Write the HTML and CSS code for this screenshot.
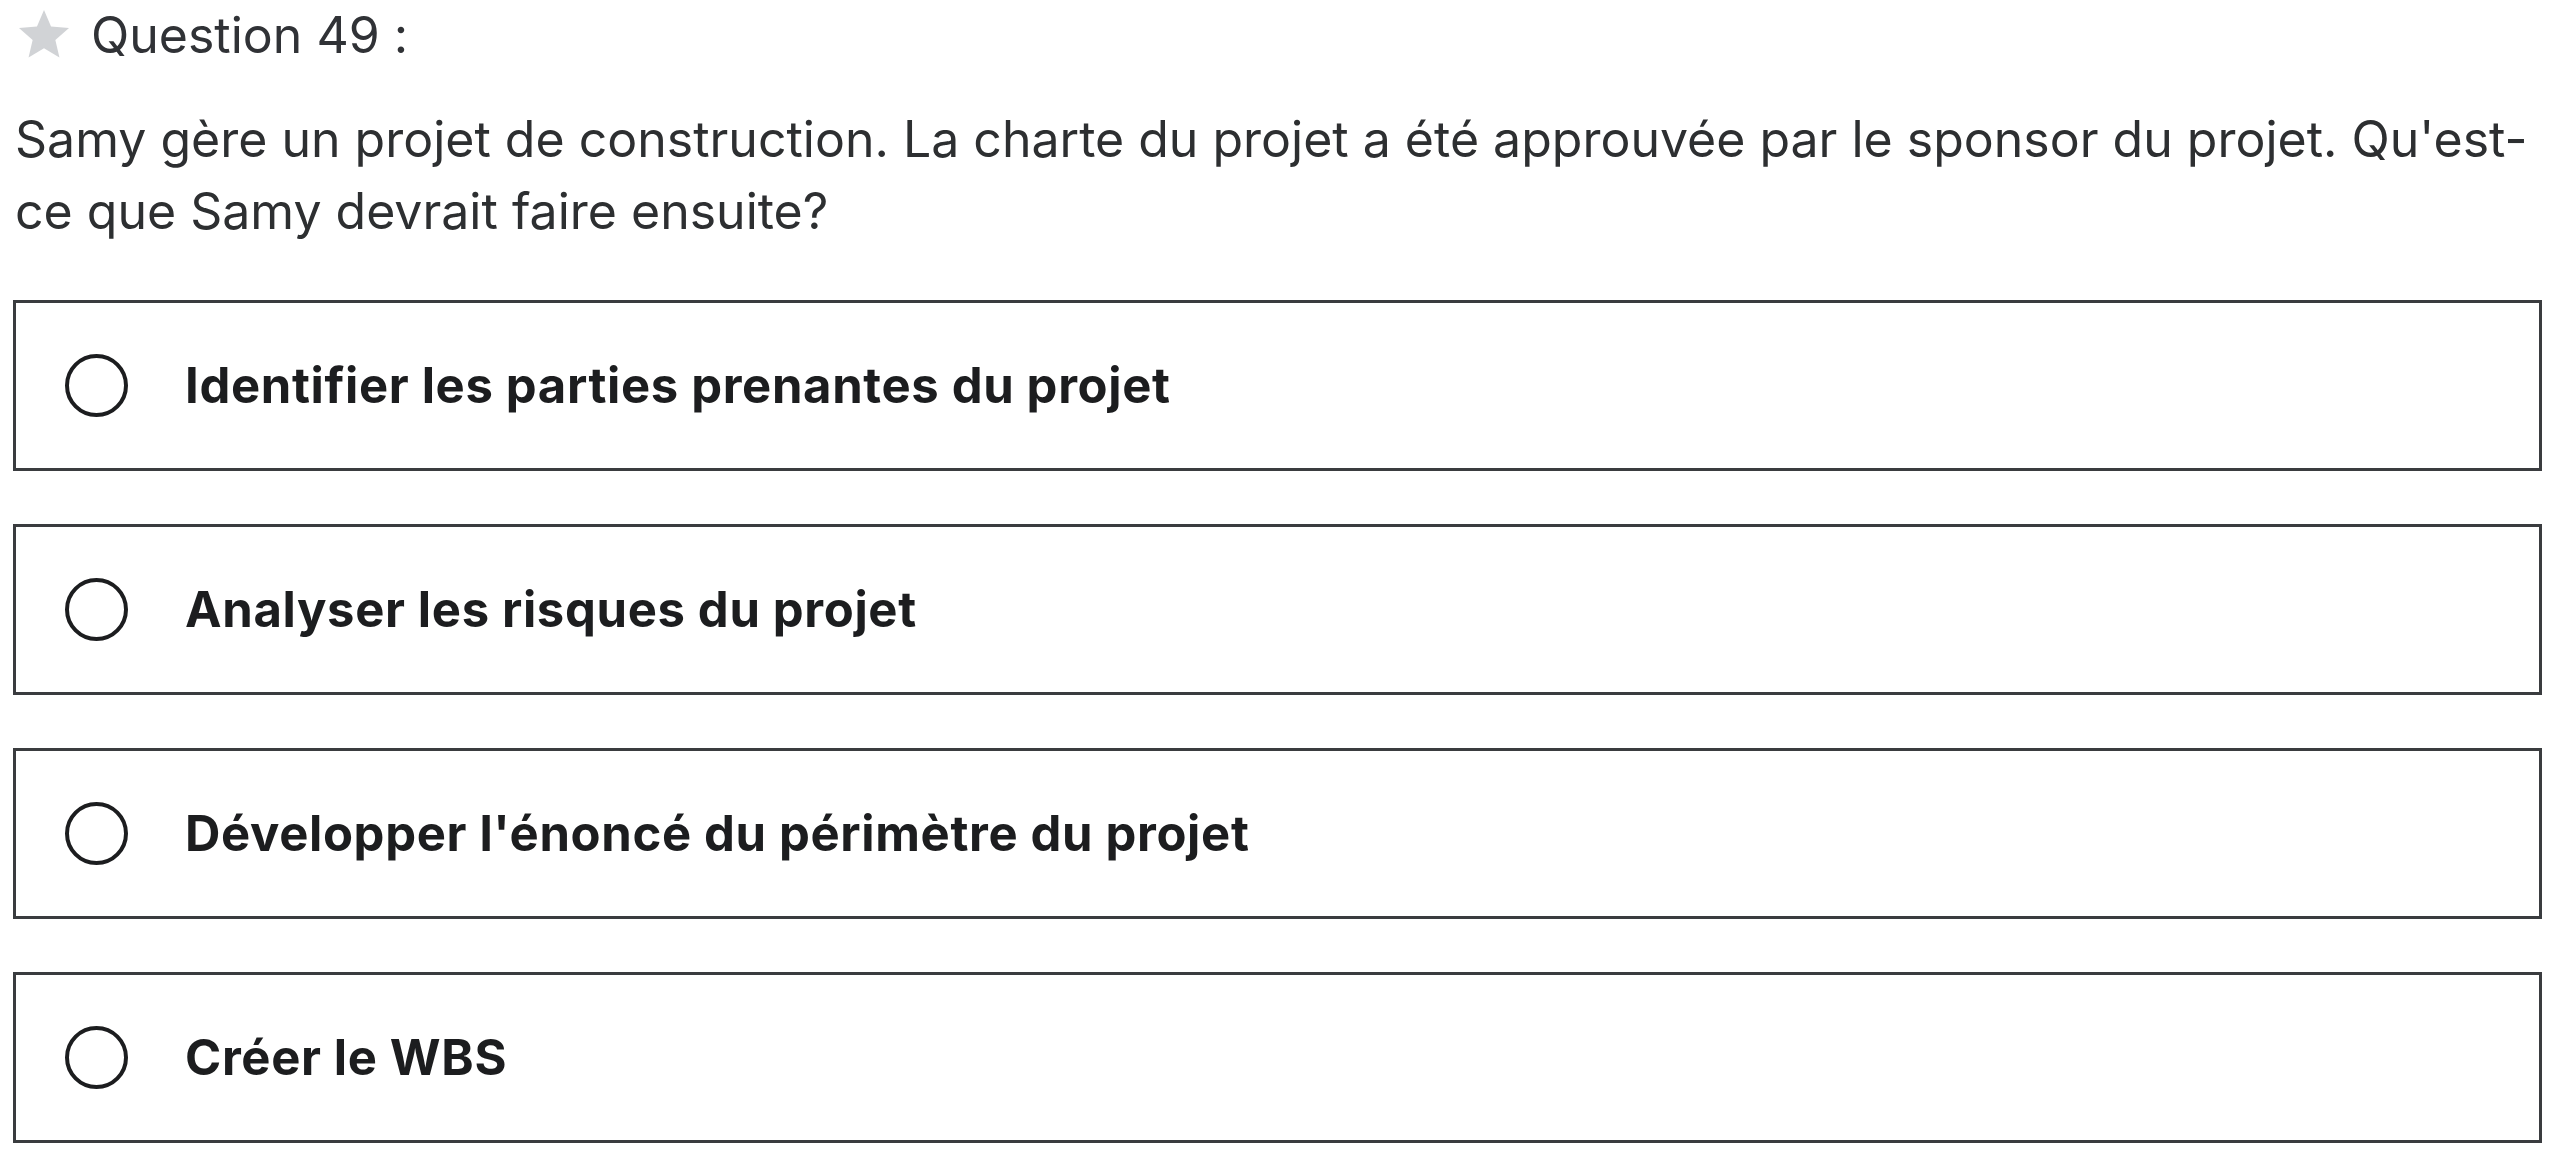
FILE: index.html
```html
<!DOCTYPE html>
<html lang="fr">
<head>
<meta charset="utf-8">
<title>Question 49</title>
<link rel="stylesheet" href="styles.css">
</head>
<body>
<main class="quiz">
  <header class="q-head">
    <svg class="star" viewBox="0 0 24 24" aria-hidden="true"><path d="M12 17.27L18.18 21l-1.64-7.03L22 9.24l-7.19-.61L12 2 9.19 8.63 2 9.24l5.46 4.73L5.82 21z"/></svg>
    <span class="q-title">Question 49 :</span>
  </header>
  <p class="q-text">Samy gère un projet de construction. La charte du projet a été approuvée par le sponsor du projet. Qu'est-ce que Samy devrait faire ensuite?</p>
  <ul class="options">
    <li class="option"><span class="radio"></span><span class="label">Identifier les parties prenantes du projet</span></li>
    <li class="option"><span class="radio"></span><span class="label">Analyser les risques du projet</span></li>
    <li class="option"><span class="radio"></span><span class="label">Développer l'énoncé du périmètre du projet</span></li>
    <li class="option"><span class="radio"></span><span class="label">Créer le WBS</span></li>
  </ul>
</main>
</body>
</html>
```
FILE: styles.css
```css
html, body {
  margin: 0;
  padding: 0;
  background: #ffffff;
}
.quiz {
  padding: 0 20px 0 13px;
  color: #2d2f31;
  font-feature-settings: "calt" 0;
}
.q-head {
  display: flex;
  align-items: center;
  height: 70px;
}
.star {
  width: 60px;
  height: 60px;
  margin-left: 1px;
  fill: #d1d3d6;
}
.q-title {
  margin-left: 17px;
  font-family: Inter, "Liberation Sans", sans-serif;
  font-size: 50px;
  line-height: 70px;
  color: #303236;
}
.q-text {
  margin: 33px 0 0 0;
  padding-left: 2px;
  font-family: Inter, "Liberation Sans", sans-serif;
  font-size: 50px;
  line-height: 72px;
  color: #2d2f31;
}
.options {
  list-style: none;
  margin: 53px 0 0 0;
  padding: 0;
  display: flex;
  flex-direction: column;
  gap: 53px;
}
.option {
  display: flex;
  align-items: center;
  height: 171px;
  box-sizing: border-box;
  border: 3px solid #3a3c3f;
  padding-left: 49px;
}
.radio {
  width: 63px;
  height: 63px;
  box-sizing: border-box;
  border: 4px solid #1c1d1f;
  border-radius: 50%;
  flex: none;
}
.label {
  margin-left: 57px;
  font-family: Inter, "Liberation Sans", sans-serif;
  font-weight: 700;
  font-size: 49px;
  letter-spacing: 0.65px;
  color: #1c1d1f;
}
```
